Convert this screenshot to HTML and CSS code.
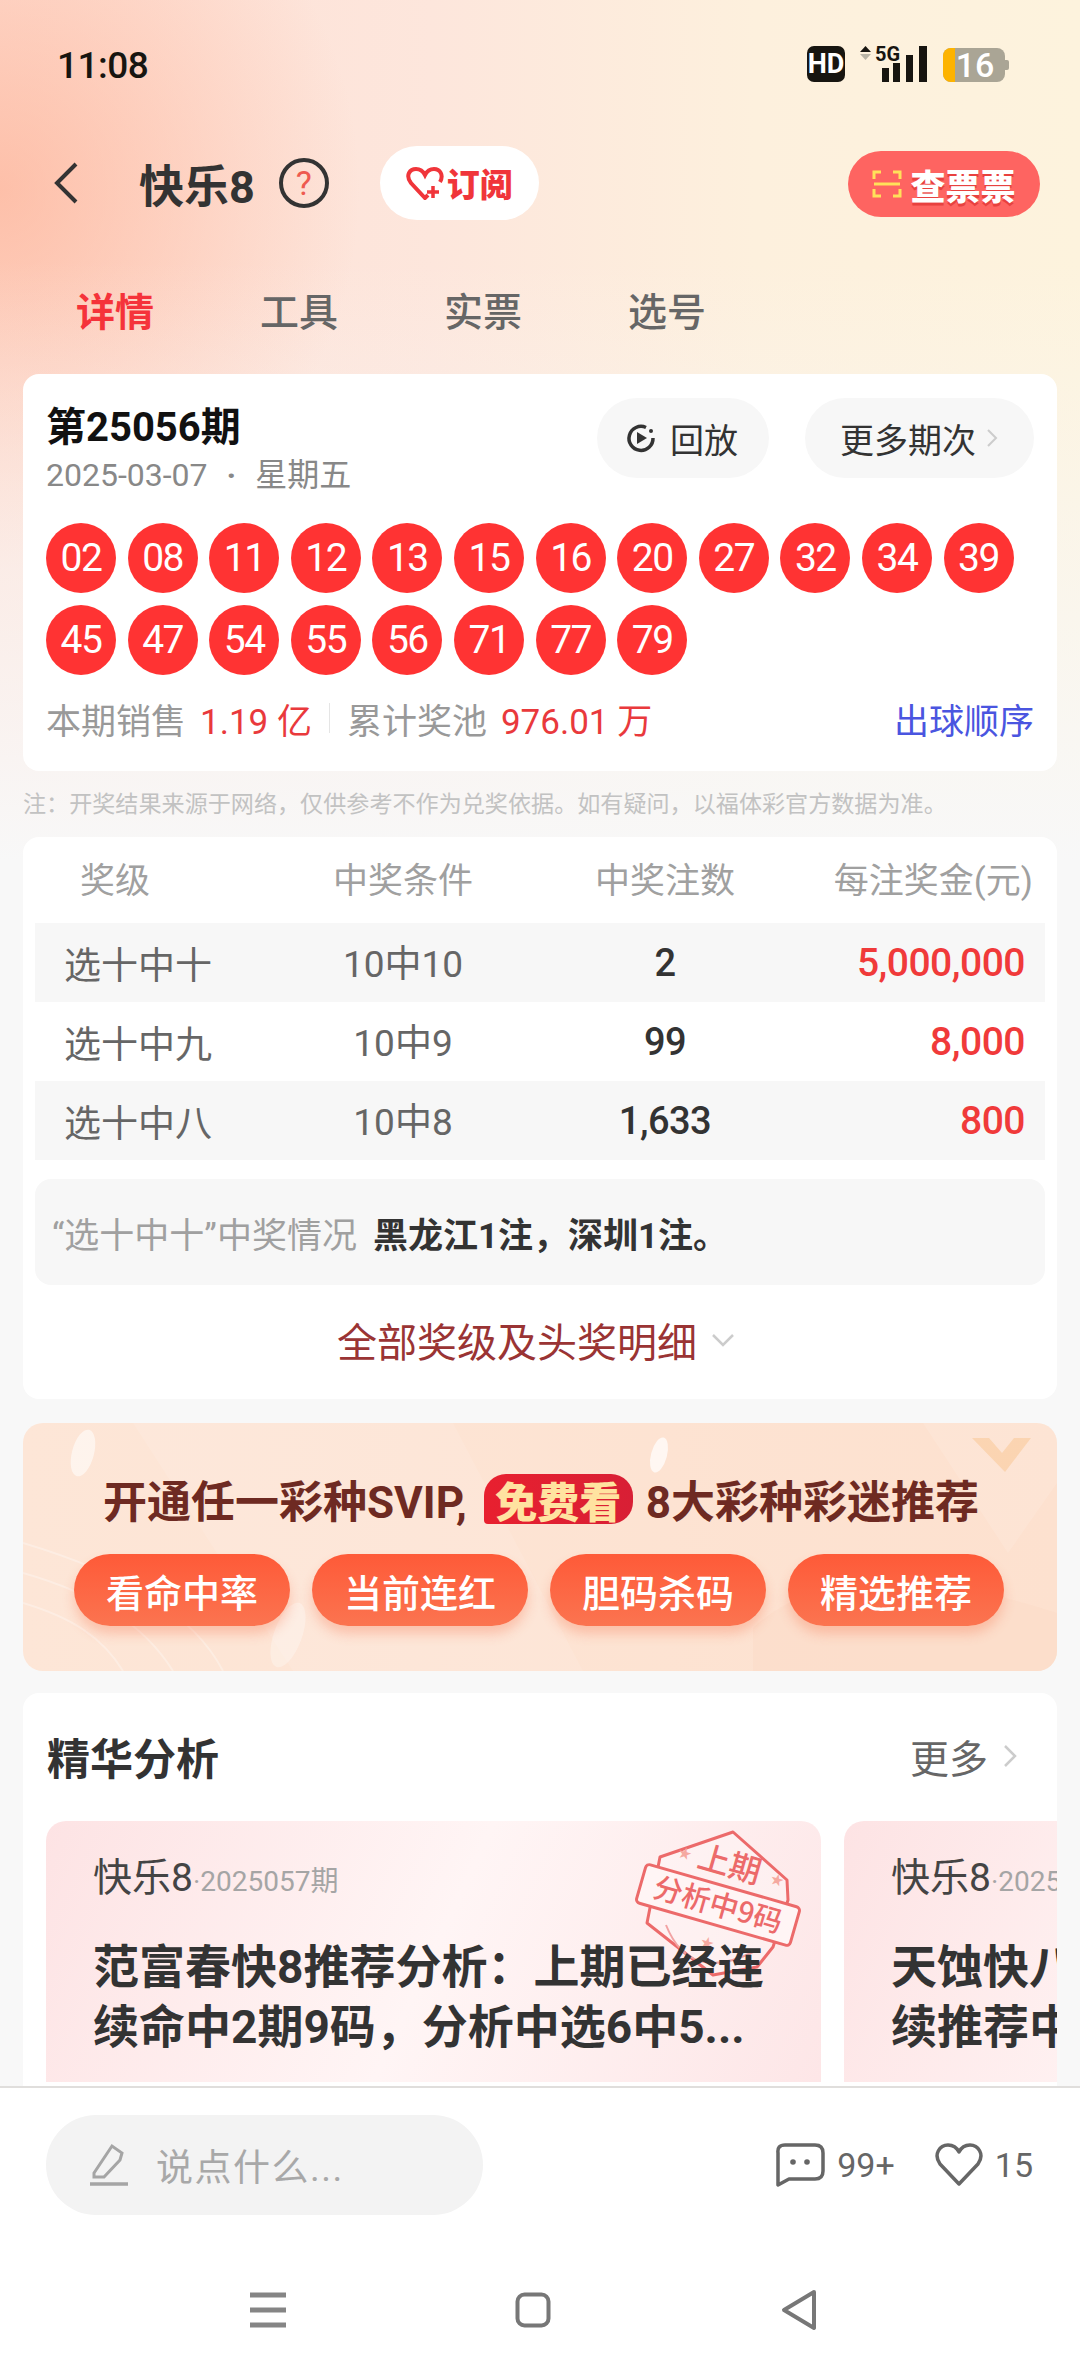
FILE: index.html
```html
<!DOCTYPE html>
<html lang="zh-CN">

<head>
    <meta charset="UTF-8">
    <meta name="viewport" content="width=device-width, initial-scale=1.0">
    <title>快乐8</title>
    <link rel="stylesheet" href="styles.css">
</head>

<body>
    <div class="screen">
        <div class="main">
            <!-- status bar -->
            <div class="status">
                <span class="time">11:08</span>
                <svg class="status-icons" width="204" height="54" viewBox="805 38 204 54">
                    <rect x="807" y="46" width="38" height="36" rx="7" fill="#171510" />
                    <text x="826" y="73" text-anchor="middle" class="st-hd">HD</text>
                    <path d="M860 52 L865.500 46 L871 52 Z" fill="#171510" />
                    <path d="M860 54 L871 54 L865.500 60 Z" fill="#b9b4a6" />
                    <text x="875" y="61" class="st-5g">5G</text>
                    <rect x="882" y="68" width="7" height="14" fill="#171510" />
                    <rect x="893" y="63" width="7" height="19" fill="#171510" />
                    <rect x="906" y="55" width="7" height="27" fill="#171510" />
                    <rect x="919" y="46" width="8" height="36" fill="#171510" />
                    <rect x="943" y="48" width="62" height="34" rx="8" fill="#aaa595" />
                    <path d="M951 48 H955 V82 H951 A8 8 0 0 1 943 74 V56 A8 8 0 0 1 951 48 Z" fill="#fdb300" />
                    <path d="M1005 60 h2 a2 2 0 0 1 2 2 v6 a2 2 0 0 1 -2 2 h-2 Z" fill="#aaa595" />
                    <text x="975" y="77" text-anchor="middle" class="st-batt">16</text>
                </svg>
            </div>

            <!-- header -->
            <div class="head">
                <svg class="back" width="26" height="44" viewBox="0 0 26 44">
                    <path d="M23 3 L4 22 L23 41" fill="none" stroke="#333" stroke-width="4" />
                </svg>
                <span class="game">快乐8</span>
                <span class="help">?</span>
                <div class="sub">
                    <svg width="38" height="34" viewBox="0 0 38 34">
                        <path d="M22 29 L19 32 L5 17 C-1 9 4 3 10 3 C14 3 17 5 19 9 C21 5 24 3 28 3 C34 3 38 9 34 16"
                            fill="none" stroke="#f0353a" stroke-width="4" />
                        <path d="M27 20 V32 M21 26 H33" stroke="#f0353a" stroke-width="3.500" />
                    </svg>
                    <span>订阅</span>
                </div>
                <div class="ticket">
                    <svg width="30" height="28" viewBox="0 0 30 28">
                        <path d="M9 2 H2 V9 M21 2 H28 V9 M9 26 H2 V19 M21 26 H28 V19" fill="none" stroke="#ffe15a"
                            stroke-width="3" />
                        <path d="M2 14 H28" stroke="#ffe15a" stroke-width="3" />
                    </svg>
                    <span>查票票</span>
                </div>
            </div>

            <!-- tabs -->
            <div class="tabs">
                <span class="tab on">详情</span>
                <span class="tab">工具</span>
                <span class="tab">实票</span>
                <span class="tab">选号</span>
            </div>

            <!-- draw result -->
            <div class="card draw">
                <div class="draw-top">
                    <div class="draw-info">
                        <div class="issue">第25056期</div>
                        <div class="date"><span>2025-03-07</span><i>·</i><span>星期五</span></div>
                    </div>
                    <div class="draw-btns">
                        <div class="pill replay">
                            <svg width="30" height="30" viewBox="0 0 30 30">
                                <path d="M20 4.500 A12 12 0 1 0 27 15" fill="none" stroke="#333" stroke-width="3.500" />
                                <circle cx="25" cy="8" r="2" fill="#333" />
                                <path d="M11 9 L21 15 L11 21 Z" fill="#333" />
                            </svg>
                            <span>回放</span>
                        </div>
                        <div class="pill more">
                            <span>更多期次</span>
                            <svg width="12" height="20" viewBox="0 0 12 20">
                                <path d="M2 2 L10 10 L2 18" fill="none" stroke="#ccc" stroke-width="2" />
                            </svg>
                        </div>
                    </div>
                </div>
                <div class="balls">
                    <span class="ball">02</span><span class="ball">08</span><span class="ball">11</span>
                    <span class="ball">12</span><span class="ball">13</span><span class="ball">15</span>
                    <span class="ball">16</span><span class="ball">20</span><span class="ball">27</span>
                    <span class="ball">32</span><span class="ball">34</span><span class="ball">39</span>
                    <span class="ball">45</span><span class="ball">47</span><span class="ball">54</span>
                    <span class="ball">55</span><span class="ball">56</span><span class="ball">71</span>
                    <span class="ball">77</span><span class="ball">79</span>
                </div>
                <div class="stats">
                    <span class="lbl">本期销售</span>
                    <span class="val">1.19 亿</span>
                    <span class="sep"></span>
                    <span class="lbl">累计奖池</span>
                    <span class="val">976.01 万</span>
                    <span class="order">出球顺序</span>
                </div>
            </div>

            <div class="note">注：开奖结果来源于网络，仅供参考不作为兑奖依据。如有疑问，以福体彩官方数据为准。</div>

            <!-- prize table -->
            <div class="card prize">
                <div class="row row-head">
                    <span class="c1">奖级</span>
                    <span class="c2">中奖条件</span>
                    <span class="c3">中奖注数</span>
                    <span class="c4">每注奖金(元)</span>
                </div>
                <div class="row row-alt">
                    <span class="c1">选十中十</span>
                    <span class="c2">10中10</span>
                    <span class="c3">2</span>
                    <span class="c4">5,000,000</span>
                </div>
                <div class="row">
                    <span class="c1">选十中九</span>
                    <span class="c2">10中9</span>
                    <span class="c3">99</span>
                    <span class="c4">8,000</span>
                </div>
                <div class="row row-alt">
                    <span class="c1">选十中八</span>
                    <span class="c2">10中8</span>
                    <span class="c3">1,633</span>
                    <span class="c4">800</span>
                </div>
                <div class="winners">
                    <span class="w-lbl">“选十中十”中奖情况</span>
                    <b>黑龙江1注，深圳1注。</b>
                </div>
                <div class="expand">
                    <span>全部奖级及头奖明细</span>
                    <svg width="24" height="14" viewBox="0 0 24 14">
                        <path d="M2 2 L12 12 L22 2" fill="none" stroke="#ccc" stroke-width="2.500" />
                    </svg>
                </div>
            </div>

            <!-- svip banner -->
            <div class="banner">
                <svg class="banner-bg" width="1034" height="248" viewBox="0 0 1034 248">
                    <path d="M110 0 H430 L560 248 H270 Z" fill="#fff" opacity="0.1" />
                    <path d="M900 0 H1034 V60 L985 130 Z" fill="#fff" opacity="0.12" />
                    <path d="M949 15 H966 L979 30 L991 15 H1008 L982 49 Z" fill="#f9cfa5" opacity="0.75" />
                    <path d="M730 248 V205 Q820 120 1034 190 V248 Z" fill="#fbdcc8" opacity="0.6" />
                    <path d="M0 120 C100 150 170 190 200 248 M0 150 C70 170 120 200 150 248 M0 180 C50 195 80 215 100 248"
                        fill="none" stroke="#fff" stroke-width="2" opacity="0.3" />
                    <ellipse cx="60" cy="30" rx="11" ry="24" transform="rotate(15 60 30)" fill="#fff" opacity="0.55" />
                    <ellipse cx="636" cy="32" rx="8" ry="18" transform="rotate(15 636 32)" fill="#fff" opacity="0.7" />
                    <ellipse cx="265" cy="212" rx="14" ry="34" transform="rotate(20 265 212)" fill="#fff" opacity="0.3" />
                </svg>
                <div class="banner-title">
                    <span>开通任一彩种SVIP,</span>
                    <em>免费看</em>
                    <span>8大彩种彩迷推荐</span>
                </div>
                <div class="banner-btns">
                    <span class="b-btn">看命中率</span>
                    <span class="b-btn">当前连红</span>
                    <span class="b-btn">胆码杀码</span>
                    <span class="b-btn">精选推荐</span>
                </div>
            </div>

            <!-- analysis -->
            <div class="analysis">
                <div class="an-head">
                    <span class="an-title">精华分析</span>
                    <span class="an-more">更多</span>
                    <svg width="14" height="24" viewBox="0 0 14 24">
                        <path d="M2 2 L12 12 L2 22" fill="none" stroke="#ccc" stroke-width="2.500" />
                    </svg>
                </div>
                <div class="an-list">
                    <div class="an-card">
                        <svg class="stamp" width="170" height="160" viewBox="634 1826 170 160">
                            <path d="M733 1832 L787 1880 L788 1900 L773 1947 L757 1967 L713 1975 L647 1923 L660 1857 Z"
                                fill="#fff" fill-opacity="0.25" stroke="#ec6a6a" stroke-width="3" stroke-linejoin="round" />
                            <path d="M666 1925 Q690 1985 757 1950" fill="none" stroke="#f2a3a3" stroke-width="2" />
                            <g transform="rotate(16 718 1905)">
                                <text x="718" y="1874" text-anchor="middle" class="stamp-top">上期</text>
                                <text x="672" y="1870" text-anchor="middle" class="stamp-star">★</text>
                                <text x="768" y="1870" text-anchor="middle" class="stamp-star">★</text>
                                <text x="718" y="1950" text-anchor="middle" class="stamp-star">★</text>
                                <rect x="638" y="1885" width="160" height="40" rx="4" fill="#fff5f5" stroke="#ec6a6a"
                                    stroke-width="3" />
                                <text x="718" y="1915" text-anchor="middle" class="stamp-band">分析中9码</text>
                            </g>
                        </svg>
                        <div class="an-meta"><span class="an-game">快乐8</span><span class="an-no">·2025057期</span></div>
                        <div class="an-text">范富春快8推荐分析：上期已经连<br>续命中2期9码，分析中选6中5...</div>
                    </div>
                    <div class="an-card">
                        <div class="an-meta"><span class="an-game">快乐8</span><span class="an-no">·2025057期</span></div>
                        <div class="an-text">天蚀快八<br>续推荐中</div>
                    </div>
                </div>
            </div>
        </div>

        <!-- bottom -->
        <div class="foot">
            <div class="foot-bar">
                <div class="say">
                    <svg width="42" height="44" viewBox="0 0 42 44">
                        <path d="M6 30 L24 3 L34 10 L32 17 L16 34 H6 Z" fill="none" stroke="#a5a5a5" stroke-width="3" />
                        <path d="M2 41 H40" stroke="#a5a5a5" stroke-width="3.500" />
                    </svg>
                    <span>说点什么...</span>
                </div>
                <div class="acts">
                    <svg width="50" height="44" viewBox="0 0 50 44">
                        <path d="M10 2 H40 Q48 2 48 10 V28 Q48 36 40 36 H14 L3 42 V10 Q2 2 10 2 Z" fill="none"
                            stroke="#666" stroke-width="3.500" stroke-linejoin="round" />
                        <circle cx="18" cy="19" r="2.800" fill="#666" />
                        <circle cx="32" cy="19" r="2.800" fill="#666" />
                    </svg>
                    <span class="cnt">99+</span>
                    <svg class="heart" width="48" height="44" viewBox="0 0 48 44">
                        <path d="M24 41 L5 21 C-2 11 5 2 13 2 C18 2 22 5 24 9 C26 5 30 2 35 2 C43 2 50 11 43 21 Z"
                            fill="none" stroke="#666" stroke-width="3.500" stroke-linejoin="round" />
                    </svg>
                    <span class="cnt">15</span>
                </div>
            </div>
            <div class="nav">
                <svg width="36" height="36" viewBox="0 0 36 36">
                    <path d="M0 3 H36 M0 18 H36 M0 33 H36" stroke="#858585" stroke-width="5" />
                </svg>
                <svg width="36" height="36" viewBox="0 0 36 36">
                    <rect x="2.500" y="2.500" width="31" height="31" rx="7" fill="none" stroke="#777" stroke-width="4" />
                </svg>
                <svg width="38" height="42" viewBox="0 0 38 42">
                    <path d="M34 3 L4 21 L34 39 Z" fill="none" stroke="#777" stroke-width="4" stroke-linejoin="round" />
                </svg>
            </div>
        </div>
    </div>
</body>

</html>
```

FILE: styles.css
```css
* {
    box-sizing: border-box;
}

body {
    margin: 0;
    font-family: Roboto, "Noto Sans CJK SC", sans-serif;
    color: #333;
}

.screen {
    width: 1080px;
    height: 2376px;
    display: flex;
    flex-direction: column;
    overflow: hidden;
    background-color: #f8f8f8;
    background-image:
        linear-gradient(to bottom, rgba(248, 248, 248, 0) 260px, #f8f8f8 860px),
        radial-gradient(360px 380px at 0px 190px, rgba(253, 170, 140, 0.6), rgba(253, 170, 140, 0)),
        linear-gradient(90deg, #fee0d5 0%, #fde6dc 40%, #fdf0dd 70%, #fdf3dd 100%);
}

.main {
    flex: 1;
    min-height: 0;
    overflow: hidden;
}

/* status bar */
.status {
    height: 130px;
    padding-left: 57px;
    padding-right: 71px;
    display: flex;
    align-items: center;
    justify-content: space-between;
}

.time {
    font-size: 37px;
    font-weight: 500;
    letter-spacing: -0.5px;
    color: #171510;
}

.st-hd {
    font: 700 27px Roboto, sans-serif;
    fill: #fff;
}

.st-5g {
    font: 700 20px Roboto, sans-serif;
    fill: #171510;
}

.st-batt {
    font: 500 34px Roboto, sans-serif;
    fill: #fff;
}

/* header */
.head {
    height: 106px;
    padding-left: 53px;
    padding-right: 40px;
    display: flex;
    align-items: center;
}

.back {
    flex: none;
}

.game {
    margin-left: 60px;
    font-size: 45px;
    font-weight: 700;
    color: #333;
}

.help {
    width: 50px;
    height: 50px;
    margin-left: 24px;
    border: 4px solid #333;
    border-radius: 50%;
    display: flex;
    align-items: center;
    justify-content: center;
    font-size: 34px;
    color: #ee5a50;
}

.sub {
    width: 159px;
    height: 74px;
    margin-left: 51px;
    border-radius: 37px;
    background: #fff;
    display: flex;
    align-items: center;
    justify-content: center;
    gap: 3px;
    font-size: 33px;
    font-weight: 900;
    color: #f0353a;
}

.ticket {
    width: 192px;
    height: 66px;
    margin-top: 2px;
    margin-left: auto;
    border-radius: 33px;
    background: #fe6461;
    display: flex;
    align-items: center;
    justify-content: center;
    gap: 8px;
    font-size: 35px;
    font-weight: 900;
    color: #fff;
    text-shadow: 0 3px 0 #e8413f;
}

/* tabs */
.tabs {
    height: 76px;
    margin-top: 35px;
    margin-bottom: 27px;
    padding-left: 76px;
    display: flex;
    align-items: center;
    gap: 104px;
}

.tab {
    width: 80px;
    font-size: 39px;
    font-weight: 500;
    color: #666;
    white-space: nowrap;
}

.tab.on {
    font-weight: 700;
    color: #f5333a;
}

/* cards */
.card {
    width: 1034px;
    margin-left: 23px;
    background: #fff;
    border-radius: 16px;
}

.draw {
    height: 397px;
    padding: 24px 23px 0;
}

.draw-top {
    height: 97px;
    display: flex;
    justify-content: space-between;
}

.issue {
    height: 52px;
    margin-top: 4px;
    line-height: 52px;
    font-size: 40px;
    font-weight: 700;
    color: #111;
}

.date {
    height: 46px;
    margin-top: -2px;
    line-height: 46px;
    font-size: 32px;
    color: #888;
}

.date i {
    margin: 0 19px;
    font-style: normal;
    font-weight: 700;
}

.draw-btns {
    display: flex;
    gap: 36px;
    margin-right: 0;
}

.pill {
    height: 80px;
    border-radius: 40px;
    background: #f7f7f7;
    display: flex;
    align-items: center;
    font-size: 34px;
    color: #333;
}

.replay {
    width: 172px;
    padding-left: 29px;
    gap: 14px;
}

.more {
    width: 229px;
    padding-left: 35px;
    gap: 10px;
}

.balls {
    margin-top: 28px;
    display: flex;
    flex-wrap: wrap;
    gap: 12px 11.6px;
}

.ball {
    width: 70px;
    height: 70px;
    border-radius: 50%;
    background: #ff3333;
    display: flex;
    align-items: center;
    justify-content: center;
    font-size: 39px;
    letter-spacing: -1.500px;
    color: #fff;
}

.stats {
    height: 50px;
    margin-top: 18px;
    display: flex;
    align-items: center;
    font-size: 35px;
}

.lbl {
    color: #999;
}

.val {
    margin-left: 14px;
    color: #e9393c;
    white-space: nowrap;
}

.sep {
    width: 1px;
    height: 30px;
    margin: 0 17px;
    background: #e5e5e5;
}

.order {
    margin-left: auto;
    color: #4a55e0;
}

.note {
    height: 66px;
    padding-left: 23px;
    padding-top: 14px;
    line-height: 40px;
    font-size: 23.100px;
    color: #c2c2c2;
    white-space: nowrap;
}

/* prize table */
.prize {
    height: 562px;
    padding: 0 12px;
}

.row {
    height: 79px;
    padding-left: 29px;
    padding-right: 19px;
    display: grid;
    grid-template-columns: 221px 236px 288px 216px;
    align-items: center;
    font-size: 37px;
    color: #333;
}

.row-alt {
    background: #f7f7f7;
}

.row-head {
    height: 86px;
    padding-bottom: 6px;
    font-size: 35px;
    color: #a0a0a0;
}

.row .c1 {
    color: #666;
}

.row .c2 {
    margin-top: -3px;
    text-align: center;
    font-size: 37px;
    color: #666;
}

.row .c3 {
    text-align: center;
    font-size: 38px;
    font-weight: 500;
    letter-spacing: -0.500px;
}

.row .c4 {
    text-align: right;
    font-size: 39px;
    font-weight: 500;
    letter-spacing: -0.500px;
    color: #f03a3a;
    white-space: nowrap;
}

.row-head .c1 {
    padding-left: 16px;
    color: #a0a0a0;
}

.row-head span.c2,
.row-head span.c3 {
    margin-top: 0;
    font-size: 35px;
    font-weight: 400;
    letter-spacing: 0;
    color: #a0a0a0;
}

.row-head span.c4 {
    margin-right: -8px;
    font-size: 35px;
    font-weight: 400;
    letter-spacing: 0;
    color: #a0a0a0;
}

.winners {
    height: 106px;
    margin-top: 19px;
    padding-left: 17px;
    border-radius: 16px;
    background: #f7f7f7;
    display: flex;
    align-items: center;
    gap: 16px;
    font-size: 35px;
}

.w-lbl {
    color: #a0a0a0;
}

.winners b {
    color: #333;
}

.expand {
    height: 110px;
    padding-right: 8px;
    display: flex;
    align-items: center;
    justify-content: center;
    gap: 14px;
    font-size: 40px;
    color: #9a3434;
}

/* svip banner */
.banner {
    position: relative;
    width: 1034px;
    height: 248px;
    margin: 24px 0 0 23px;
    overflow: hidden;
    border-radius: 20px;
    background: linear-gradient(90deg, #fde6d7, #fde1cf);
}

.banner-bg {
    position: absolute;
    left: 0;
    top: 0;
}

.banner-title {
    position: relative;
    height: 54px;
    padding-top: 49px;
    padding-left: 80px;
    display: flex;
    align-items: center;
    box-sizing: content-box;
    font-size: 44px;
    font-weight: 700;
    color: #6e2a22;
    white-space: nowrap;
}

.banner-title em {
    width: 149px;
    height: 50px;
    margin: 0 13px 0 17px;
    border-radius: 22px 22px 22px 4px;
    background: linear-gradient(90deg, #e8202f, #d81f35);
    display: flex;
    align-items: center;
    justify-content: center;
    font-size: 42px;
    font-style: normal;
    font-weight: 900;
    color: #ffe3a0;
}

.banner-btns {
    position: relative;
    margin-top: 28px;
    padding-left: 51px;
    display: flex;
    gap: 22px;
}

.b-btn {
    width: 216px;
    height: 72px;
    border-radius: 36px;
    background: linear-gradient(180deg, #fe5a38, #fb7450);
    box-shadow: 0 8px 12px rgba(250, 110, 70, 0.3);
    display: flex;
    align-items: center;
    justify-content: center;
    font-size: 38px;
    font-weight: 500;
    color: #fff;
}

/* analysis */
.analysis {
    width: 1034px;
    height: 400px;
    margin: 22px 0 0 23px;
    overflow: hidden;
    border-radius: 16px 16px 0 0;
    background: #fff;
}

.an-head {
    height: 128px;
    padding: 0 40px 2px 24px;
    display: flex;
    align-items: center;
}

.an-title {
    font-size: 43px;
    font-weight: 700;
    color: #333;
}

.an-more {
    margin-left: auto;
    margin-right: 15px;
    font-size: 39px;
    color: #666;
}

.an-list {
    padding-left: 23px;
    display: flex;
    gap: 23px;
}

.an-card {
    position: relative;
    flex: none;
    width: 775px;
    height: 261px;
    padding: 32px 0 0 47px;
    border-radius: 20px 20px 0 0;
    background: linear-gradient(115deg, #fde3e4 0%, #fff5f5 50%, #fde6e7 100%);
}

.stamp {
    position: absolute;
    left: 588px;
    top: 5px;
}

.stamp-top {
    font: 500 32px "Noto Sans CJK SC", sans-serif;
    fill: #ec6a6a;
}

.stamp-band {
    font: 500 29px "Noto Sans CJK SC", sans-serif;
    fill: #ec6a6a;
}

.stamp-star {
    font: 400 16px "DejaVu Sans", sans-serif;
    fill: #f5a9a0;
}

.an-meta {
    position: relative;
    height: 50px;
    line-height: 50px;
    white-space: nowrap;
}

.an-game {
    font-size: 39px;
    color: #444;
}

.an-no {
    font-size: 28px;
    color: #a5a5a5;
}

.an-text {
    position: relative;
    margin-top: 34px;
    line-height: 60px;
    font-size: 46px;
    font-weight: 700;
    color: #333;
    white-space: nowrap;
}

/* bottom */
.foot {
    flex: none;
    height: 290px;
    border-top: 2px solid #e0dedc;
    background: #fff;
}

.foot-bar {
    margin-top: 27px;
    padding: 0 47px 0 46px;
    display: flex;
    align-items: center;
    justify-content: space-between;
}

.say {
    width: 437px;
    height: 100px;
    padding-left: 42px;
    border-radius: 50px;
    background: #f3f3f3;
    display: flex;
    align-items: center;
    gap: 26px;
    font-size: 37px;
    letter-spacing: 1.500px;
    color: #a8a8a8;
}

.acts {
    display: flex;
    align-items: center;
}

.cnt {
    margin-left: 12px;
    font-size: 34px;
    color: #666;
}

.heart {
    margin-left: 40px;
}

.nav {
    margin-top: 74px;
    padding: 0 262px 0 250px;
    display: flex;
    align-items: center;
    justify-content: space-between;
}
```
